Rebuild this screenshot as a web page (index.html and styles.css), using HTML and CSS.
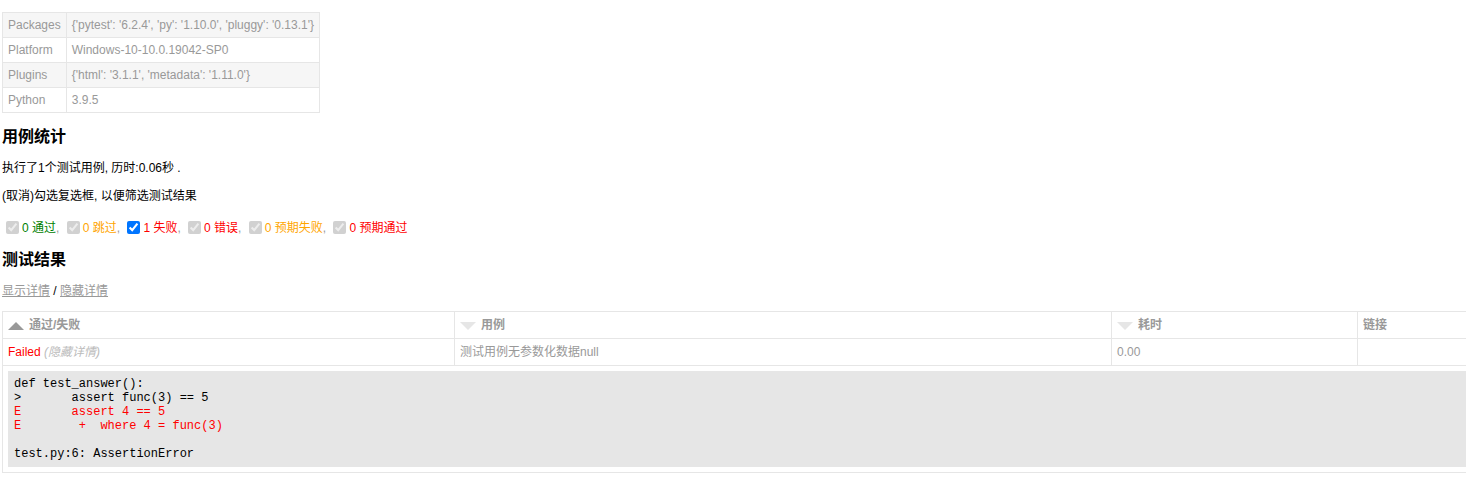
FILE: index.html
```html
<!DOCTYPE html>
<html lang="zh-CN">
<head>
	<meta charset="UTF-8">
	<title>测试报告</title>
<link rel="stylesheet" href="styles.css">
</head>
<body>
	<table id="environment">
		<tr><td>Packages</td><td>{'pytest': '6.2.4', 'py': '1.10.0', 'pluggy': '0.13.1'}</td></tr>
		<tr><td>Platform</td><td>Windows-10-10.0.19042-SP0</td></tr>
		<tr><td>Plugins</td><td>{'html': '3.1.1', 'metadata': '1.11.0'}</td></tr>
		<tr><td>Python</td><td>3.9.5</td></tr>
	</table>

	<h2>用例统计</h2>
	<p>执行了1个测试用例, 历时:0.06秒 .</p>
	<p class="filter">(取消)勾选复选框, 以便筛选测试结果</p>
	<p class="filter checks">
		<input type="checkbox" checked disabled><span class="passed">0 通过</span><span class="sep">, </span>
		<input type="checkbox" checked disabled><span class="skipped">0 跳过</span><span class="sep">, </span>
		<input type="checkbox" checked><span class="failed">1 失败</span><span class="sep">, </span>
		<input type="checkbox" checked disabled><span class="error">0 错误</span><span class="sep">, </span>
		<input type="checkbox" checked disabled><span class="xfailed">0 预期失败</span><span class="sep">, </span>
		<input type="checkbox" checked disabled><span class="xpassed">0 预期通过</span>
	</p>

	<h2>测试结果</h2>
	<p class="filter"><a href="#">显示详情</a> / <a href="#">隐藏详情</a></p>

	<table id="results-table">
		<colgroup>
			<col class="c-result">
			<col class="c-name">
			<col class="c-duration">
			<col class="c-links">
		</colgroup>
		<thead>
			<tr>
				<th class="sortable asc active"><div class="sort-icon"></div>通过/失败</th>
				<th class="sortable inactive"><div class="sort-icon"></div>用例</th>
				<th class="sortable inactive"><div class="sort-icon"></div>耗时</th>
				<th>链接</th>
			</tr>
		</thead>
		<tbody class="failed">
			<tr>
				<td class="col-result">Failed<span class="collapser"> (隐藏详情)</span></td>
				<td>测试用例无参数化数据null</td>
				<td>0.00</td>
				<td></td>
			</tr>
			<tr>
				<td class="extra" colspan="4"><div class="log">def test_answer():
&gt;       assert func(3) == 5
<span class="error">E       assert 4 == 5
E        +  where 4 = func(3)</span>

test.py:6: AssertionError</div></td>
			</tr>
		</tbody>
	</table>
</body>
</html>
```

FILE: styles.css
```css
html{overflow: hidden;}
body{margin: 12px 0 0 2px;font-family: "Liberation Sans", Helvetica, Arial, "Noto Sans CJK SC", sans-serif;font-size: 12px;line-height: 16px;color: #999;min-width: 1200px;}
h2{font-size: 16px;line-height: 21px;color: black;margin: 13px 0;}
p{color: black;margin: 12px 0;}
a{color: #999;}
table{border-collapse: collapse;}

#environment td{padding: 5px;border: 1px solid #e6e6e6;line-height: 14px;}
#environment tr:nth-child(odd){background-color: #f6f6f6;}

.checks{margin-top: 16px;}
.filter input{width: 13px;height: 13px;margin: 0 3px 0 4px;vertical-align: -2px;}
.filter .sep{color: #999;}

span.passed{color: green;}
span.skipped,span.xfailed{color: orange;}
span.error,span.failed,span.xpassed,.failed .col-result{color: red;}

#results-table{border: 1px solid #e6e6e6;color: #999;font-size: 12px;width: 1480px;table-layout: fixed;}
#results-table th,#results-table td{padding: 5px;border: 1px solid #e6e6e6;text-align: left;}
#results-table th{font-weight: bold;}
.c-result{width: 452px;}
.c-name{width: 657px;}
.c-duration{width: 246px;}

.sort-icon{float: left;width: 0;height: 0;margin-top: 5px;margin-right: 5px;border-left: 8px solid transparent;border-right: 8px solid transparent;}
.inactive .sort-icon{border-top: 8px solid #e6e6e6;}
.asc.active .sort-icon{border-bottom: 8px solid #999;}

.collapser{color: #bbb;font-style: italic;}

.log{background-color: #e6e6e6;border: 1px solid #e6e6e6;color: black;font-family: "Liberation Mono", "Courier New", monospace;font-size: 12px;line-height: 14px;padding: 5px;white-space: pre-wrap;}
.log .error{color: red;}
```
